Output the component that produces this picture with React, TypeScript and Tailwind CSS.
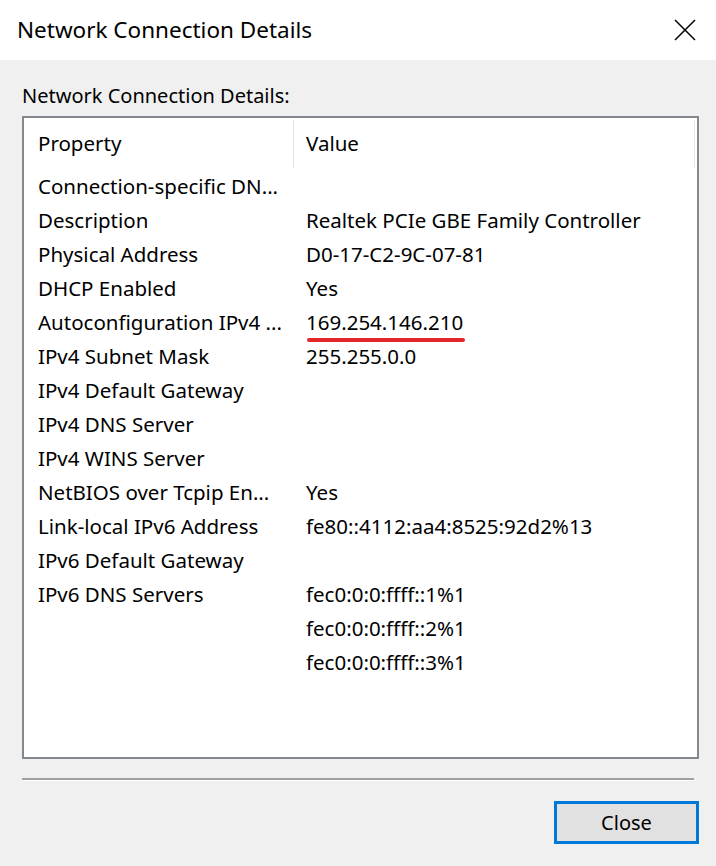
import React from 'react';

const rows: [string, string][] = [
  ['Connection-specific DN...', ''],
  ['Description', 'Realtek PCIe GBE Family Controller'],
  ['Physical Address', 'D0-17-C2-9C-07-81'],
  ['DHCP Enabled', 'Yes'],
  ['Autoconfiguration IPv4 ...', '169.254.146.210'],
  ['IPv4 Subnet Mask', '255.255.0.0'],
  ['IPv4 Default Gateway', ''],
  ['IPv4 DNS Server', ''],
  ['IPv4 WINS Server', ''],
  ['NetBIOS over Tcpip En...', 'Yes'],
  ['Link-local IPv6 Address', 'fe80::4112:aa4:8525:92d2%13'],
  ['IPv6 Default Gateway', ''],
  ['IPv6 DNS Servers', 'fec0:0:0:ffff::1%1'],
  ['', 'fec0:0:0:ffff::2%1'],
  ['', 'fec0:0:0:ffff::3%1'],
];

const App = () => {
  return (
    <div className="w-[716px] h-[866px] bg-[#f0f0f0] flex flex-col font-['Noto_Sans',sans-serif] text-[20px] text-black">
      <div className="h-[60px] bg-white flex items-center justify-between pl-[17px] pr-[16px]">
        <span className="text-[22.5px]">Network Connection Details</span>
        <svg width="22" height="22" viewBox="0 0 22 22" className="mr-[4px]">
          <path d="M1 1L21 21M21 1L1 21" stroke="#000" strokeWidth="1.5" />
        </svg>
      </div>

      <div className="flex flex-col px-[22px] pt-[23px]">
        <div className="leading-[26px] h-[33px]">Network Connection Details:</div>

        <div className="w-[677px] h-[643px] border-2 border-[#828790] bg-white flex flex-col text-[20.5px]">
          <div className="h-[51px] flex items-center">
            <div className="w-[269px] h-[48px] pl-[14px] flex items-center">Property</div>
            <div className="w-[402px] h-[48px] pl-[12px] flex items-center border-l border-r border-[#e5e5e5]">Value</div>
          </div>
          {rows.map(([prop, value], i) => (
            <div key={i} className="h-[34px] flex items-center">
              <div className="w-[269px] pl-[14px] whitespace-nowrap">{prop}</div>
              <div className="pl-[13px] whitespace-nowrap">
                {value === '169.254.146.210' ? (
                  <span className="relative">
                    {value}
                    <span className="absolute left-[1px] right-[-2px] bottom-[-6px] h-[4px] rounded-full bg-[#e3262b]" />
                  </span>
                ) : (
                  value
                )}
              </div>
            </div>
          ))}
        </div>

        <div className="mt-[19px] w-[672px] h-[3px] border-t-2 border-[#a0a0a0] bg-white" />

        <div className="flex justify-end mt-[20px]">
          <button className="w-[145px] h-[43px] mr-[-5px] border-[3px] border-[#0078d7] bg-[#e1e1e1] flex items-center justify-center">
            Close
          </button>
        </div>
      </div>
    </div>
  );
};

export default App;
